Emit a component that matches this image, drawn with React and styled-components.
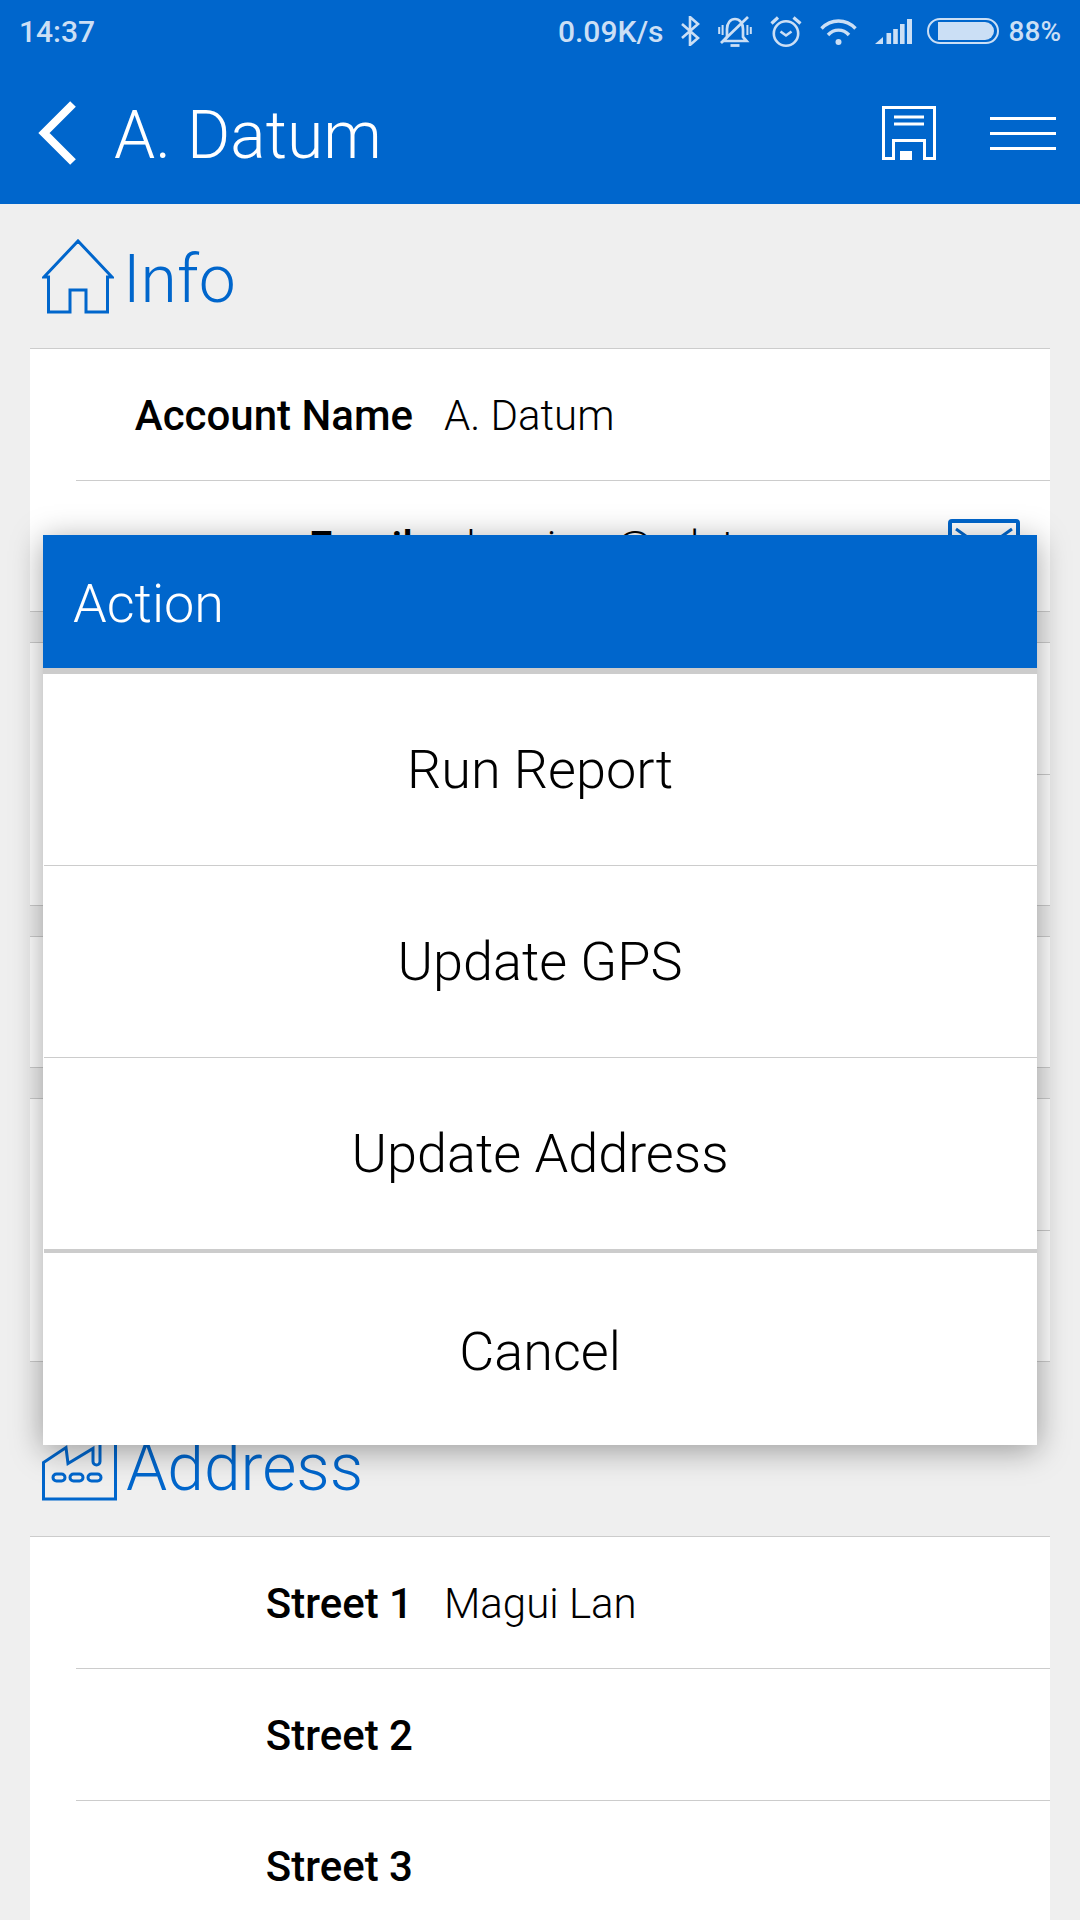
import React from 'react';
import styled, { createGlobalStyle } from 'styled-components';

const BLUE = '#0066cc';
const STATUS = '#cbdff5';
const LINE = '#cccccc';

const GlobalStyle = createGlobalStyle`
  html, body {
    margin: 0;
    padding: 0;
    background: #efefef;
  }
  body {
    font-family: Roboto, "Liberation Sans", sans-serif;
  }
`;

const Page = styled.div`
  position: relative;
  width: 1080px;
  height: 1920px;
  overflow: hidden;
  background: #efefef;
`;

const AppBar = styled.header`
  background: ${BLUE};
  height: 204px;
`;

const StatusBar = styled.div`
  display: flex;
  align-items: center;
  height: 62px;
  padding: 0 19px;
  color: ${STATUS};
  font-size: 30px;
  font-weight: 500;
`;

const StatusIcons = styled.div`
  display: flex;
  align-items: center;
  gap: 18px;
  margin-left: auto;
`;

const Speed = styled.span`
  margin-right: -2px;
`;

const Percent = styled.span`
  margin-left: -8px;
  font-size: 28px;
`;

const BatteryFrame = styled.svg`
  margin-left: -3px;
`;

const NavBar = styled.div`
  display: flex;
  align-items: center;
  height: 142px;
  padding: 0 24px 0 38px;
`;

const Title = styled.h1`
  flex: 1;
  margin: 0 0 0 38px;
  padding-top: 4px;
  color: #fff;
  font-size: 66px;
  font-weight: 300;
`;

const Burger = styled.div`
  display: flex;
  flex-direction: column;
  gap: 12px;
  width: 66px;
  margin-left: 54px;

  span {
    height: 3px;
    background: #fff;
  }
`;

const Heading = styled.div`
  display: flex;
  align-items: center;
  gap: 9px;
  height: 144px;
  padding-left: 42px;
  margin-top: ${props => props.top || 0}px;
`;

const HeadingText = styled.h2`
  margin: 0;
  padding-top: 7px;
  color: ${BLUE};
  font-size: 66px;
  font-weight: 300;
`;

const CardList = styled.div`
  display: flex;
  flex-direction: column;
  gap: 30px;
`;

const Card = styled.section`
  margin: 0 30px;
  background: #fff;
  border-top: 1px solid ${LINE};
  border-bottom: 1px solid ${LINE};
`;

const Row = styled.div`
  display: flex;
  align-items: center;
  gap: 31px;
  height: 131px;
  margin-left: 46px;

  & + & {
    border-top: 1px solid ${LINE};
  }

  &:only-child,
  & + &:last-child {
    height: 130px;
  }
`;

const Label = styled.div`
  width: 337px;
  padding-top: 1px;
  color: #000;
  font-size: 42px;
  font-weight: 500;
  text-align: right;
`;

const Value = styled.div`
  flex: 1;
  padding-top: 1px;
  color: #000;
  font-size: 42px;
  font-weight: 300;
`;

const MailIcon = styled.svg`
  margin-right: 30px;
`;

const Modal = styled.div`
  position: absolute;
  top: 535px;
  left: 43px;
  width: 994px;
  background: #fff;
  box-shadow: 0 5px 30px rgba(0, 0, 0, 0.36);
`;

const ModalHeader = styled.div`
  display: flex;
  align-items: center;
  height: 133px;
  padding: 3px 0 0 30px;
  box-sizing: border-box;
  background: ${BLUE};
  color: #fff;
  font-size: 54px;
  font-weight: 300;
`;

const ModalRule = styled.div`
  height: ${props => props.size}px;
  margin-left: ${props => (props.inset ? 1 : 0)}px;
  background: ${LINE};
`;

const ModalItem = styled.div`
  display: flex;
  align-items: center;
  justify-content: center;
  height: 191px;
  color: #000;
  font-size: 54px;
  font-weight: 300;
`;

const CancelItem = styled(ModalItem)`
  box-sizing: border-box;
  height: 192px;
  padding-top: 4px;
`;

const BluetoothIcon = () => (
  <svg width="20" height="30" viewBox="0 0 20 30" fill="none" stroke={STATUS} strokeWidth="2.6">
    <path d="M2 8 18 22 10 29V1l8 7L2 22" />
  </svg>
);

const MutedBellIcon = () => (
  <svg width="34" height="31" viewBox="0 0 34 31" fill="none" stroke={STATUS} strokeWidth="2.7">
    <path d="M5.500 25h23L25 21v-8c0-6-3.500-10-8-10s-8 4-8 10v8z" />
    <path d="M12.500 29.500h9" strokeWidth="2.800" />
    <path d="M3 27 30 1" />
    <path d="M1.200 11v7M4.600 9v10M29.400 9v10M32.800 11v7" strokeWidth="2" />
  </svg>
);

const AlarmIcon = () => (
  <svg width="32" height="32" viewBox="0 0 32 32" fill="none" stroke={STATUS} strokeWidth="2.6">
    <circle cx="16" cy="18.500" r="12.200" />
    <path d="M10.500 16.500l5.500 4 5.500-4" />
    <path d="M1.500 8.500 8 2.500M23.500 2.500 30.500 8.500" strokeWidth="3.200" />
  </svg>
);

const WifiIcon = () => (
  <svg width="37" height="27" viewBox="0 0 37 27" fill="none" stroke={STATUS} strokeWidth="3.400">
    <path d="M1.500 10.500c9.500-10 24.500-10 34 0" />
    <path d="M8 17c6-6.500 15-6.500 21 0" />
    <circle cx="18.500" cy="24" r="3" fill={STATUS} stroke="none" />
  </svg>
);

const SignalIcon = () => (
  <svg width="37" height="25" viewBox="0 0 37 25" fill={STATUS}>
    <path d="M0 25 8 18v7z" />
    <rect x="11.500" y="14" width="4.600" height="11" />
    <rect x="18.200" y="10" width="4.600" height="15" />
    <rect x="25" y="5" width="4.600" height="20" />
    <rect x="32" y="0" width="5" height="25" />
  </svg>
);

const BatteryIcon = () => (
  <BatteryFrame width="72" height="26" viewBox="0 0 72 26" fill="none">
    <rect x="1" y="1" width="70" height="24" rx="12" stroke={STATUS} strokeWidth="2" />
    <path d="M11 4h47a9 9 0 0 1 0 18H11z" fill={STATUS} />
  </BatteryFrame>
);

const BackIcon = () => (
  <svg width="38" height="64" viewBox="0 0 38 64" fill="none" stroke="#fff" strokeWidth="8">
    <path d="M35 3 6 32l29 29" />
  </svg>
);

const SaveIcon = () => (
  <svg width="54" height="54" viewBox="0 0 54 54" fill="none" stroke="#fff" strokeWidth="3">
    <path d="M1.500 1.500h51v51H42.500v-18h-31v18H1.500z" />
    <path d="M12 11h30M12 18h30" />
    <rect x="18" y="45" width="12" height="9" fill="#fff" stroke="none" />
  </svg>
);

const HomeIcon = () => (
  <svg width="72" height="75" viewBox="0 0 72 75" fill="none" stroke={BLUE} strokeWidth="3">
    <path d="M2 38 36 2l34 36h-4.500v35H44V51H28v22H6.500V38z" />
  </svg>
);

const FactoryIcon = () => (
  <svg width="75" height="75" viewBox="0 1.500 75 75" fill="none" stroke={BLUE} strokeWidth="3">
    <path d="M1.500 37v36.500h72V8H58v28a3.500 3.500 0 0 1-7 0V23L26 38l-2-16z" />
    <rect x="11" y="48.500" width="12" height="7" rx="3.500" />
    <rect x="28" y="48.500" width="13" height="7" rx="3.500" />
    <rect x="46" y="48.500" width="13" height="7" rx="3.500" />
  </svg>
);

const EnvelopeIcon = () => (
  <MailIcon width="72" height="54" viewBox="0 0 72 54" fill="none" stroke={BLUE}>
    <rect x="2" y="2" width="68" height="50" rx="2" strokeWidth="4" />
    <path d="M8 10 36 30 64 10" strokeWidth="3" />
  </MailIcon>
);

const DetailRow = ({ label, value, children }) => (
  <Row>
    <Label>{label}</Label>
    <Value>{value}</Value>
    {children}
  </Row>
);

const actions = ['Run Report', 'Update GPS', 'Update Address'];

export default function App() {
  return (
    <Page>
      <GlobalStyle />
      <AppBar>
        <StatusBar>
          <span>14:37</span>
          <StatusIcons>
            <Speed>0.09K/s</Speed>
            <BluetoothIcon />
            <MutedBellIcon />
            <AlarmIcon />
            <WifiIcon />
            <SignalIcon />
            <BatteryIcon />
            <Percent>88%</Percent>
          </StatusIcons>
        </StatusBar>
        <NavBar>
          <BackIcon />
          <Title>A. Datum</Title>
          <SaveIcon />
          <Burger>
            <span />
            <span />
            <span />
          </Burger>
        </NavBar>
      </AppBar>

      <Heading>
        <HomeIcon />
        <HeadingText>Info</HeadingText>
      </Heading>
      <CardList>
        <Card>
          <DetailRow label="Account Name" value="A. Datum" />
          <DetailRow label="Email" value="akmaisrn@adatum.com">
            <EnvelopeIcon />
          </DetailRow>
        </Card>
        <Card>
          <Row />
          <Row />
        </Card>
        <Card>
          <Row />
        </Card>
        <Card>
          <Row />
          <Row />
        </Card>
      </CardList>

      <Heading top={30}>
        <FactoryIcon />
        <HeadingText>Address</HeadingText>
      </Heading>
      <Card>
        <DetailRow label="Street 1" value="Magui Lan" />
        <DetailRow label="Street 2" />
        <DetailRow label="Street 3" />
      </Card>

      <Modal>
        <ModalHeader>Action</ModalHeader>
        <ModalRule size={6} />
        {actions.map((action, i) => (
          <React.Fragment key={action}>
            {i > 0 && <ModalRule size={1} inset />}
            <ModalItem>{action}</ModalItem>
          </React.Fragment>
        ))}
        <ModalRule size={4} inset />
        <CancelItem>Cancel</CancelItem>
      </Modal>
    </Page>
  );
}
